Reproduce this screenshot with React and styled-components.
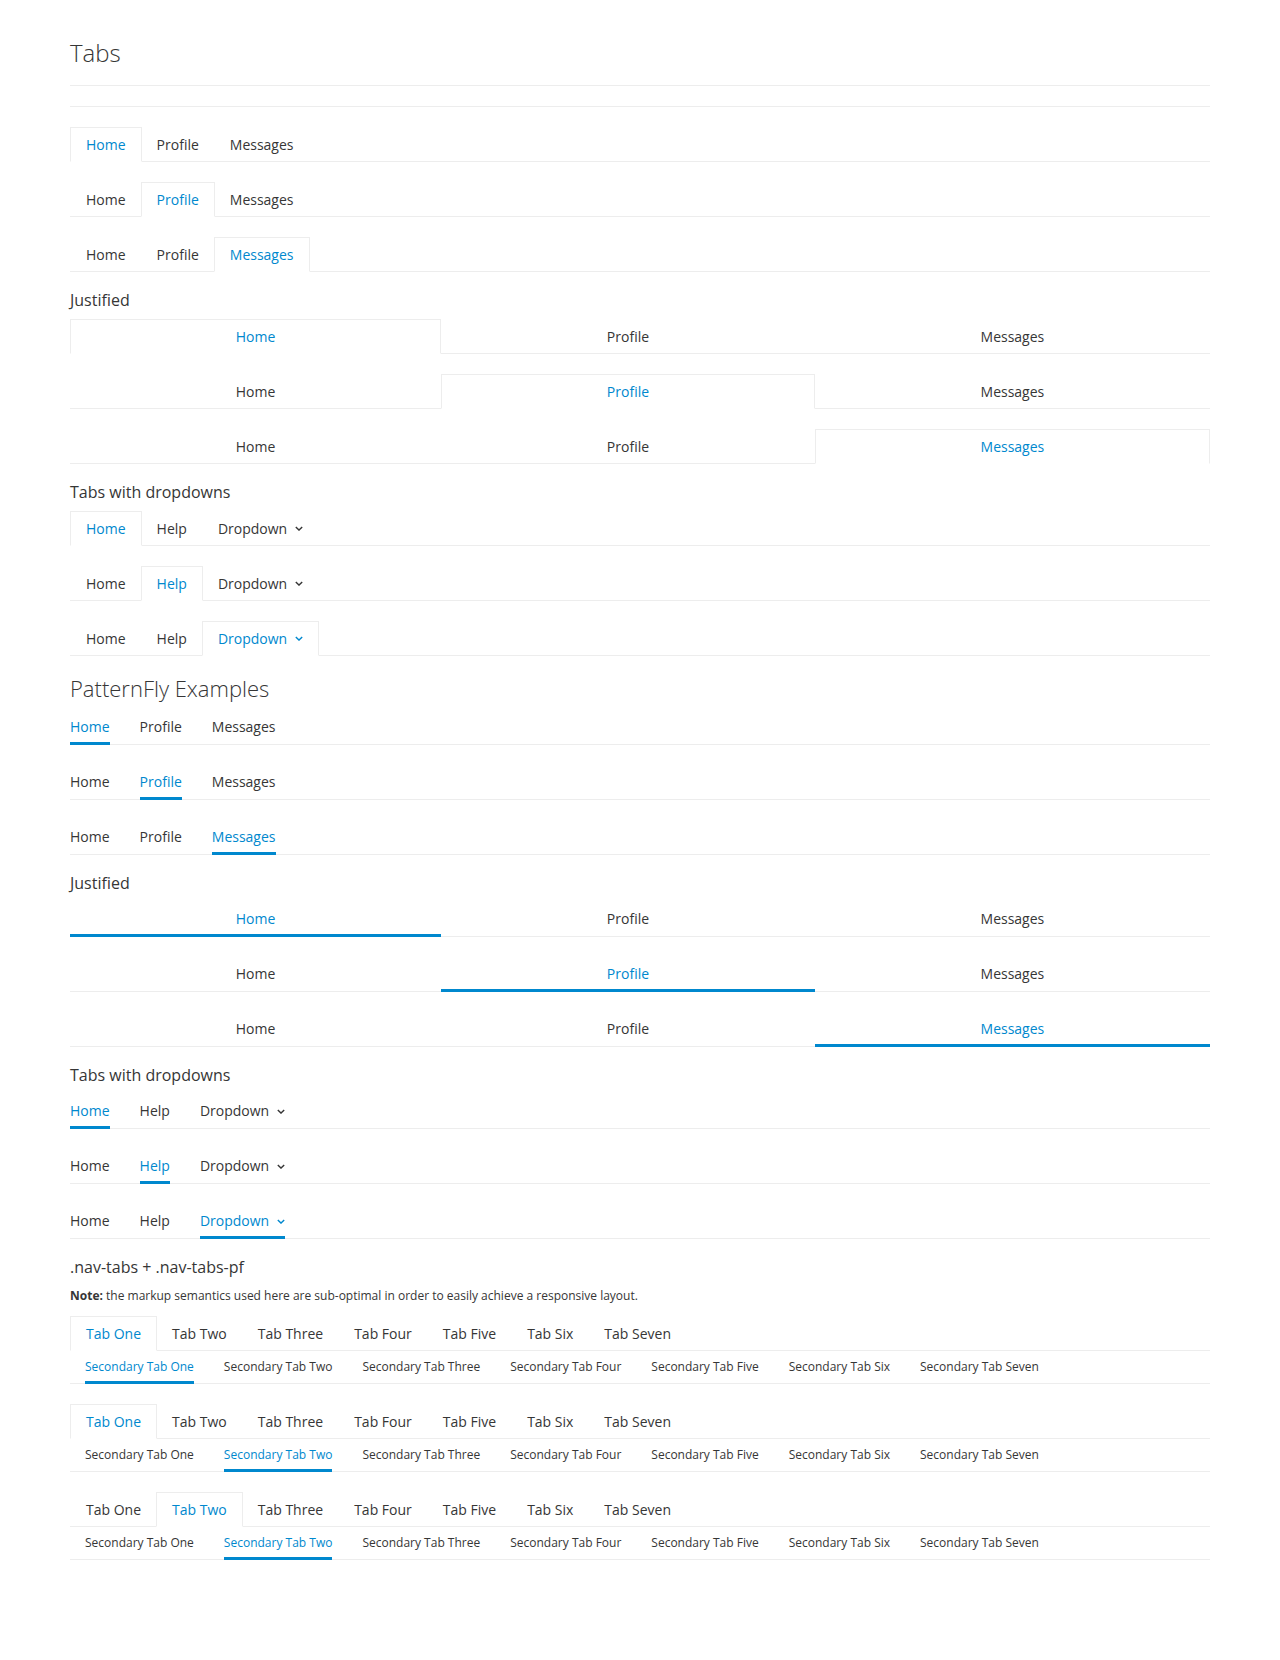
import React from "react";
import styled, { createGlobalStyle, css } from "styled-components";

const BLUE = "#0088ce";
const LINE = "#ededed";
const TEXT = "#363636";

const GlobalStyle = createGlobalStyle`
  body {
    margin: 0;
    background: #fff;
    color: ${TEXT};
    font-family: "Open Sans", "Liberation Sans", sans-serif;
    font-size: 14px;
  }
  * {
    box-sizing: border-box;
  }
`;

const Container = styled.div`
  width: 1140px;
  margin: 0 auto;
  padding: 40px 0 60px;
`;

const PageTitle = styled.h1`
  margin: 0 0 20px;
  padding-bottom: 19px;
  border-bottom: 1px solid ${LINE};
  font-size: 24px;
  font-weight: 300;
  line-height: 26px;
`;

const Rule = styled.hr`
  margin: 0 0 20px;
  height: 0;
  border: 0;
  border-top: 1px solid ${LINE};
`;

const SectionTitle = styled.h2`
  margin: 0 0 10px;
  font-size: 22px;
  font-weight: 300;
  line-height: 24px;
`;

const SubTitle = styled.h3`
  margin: 0 0 11px;
  font-size: 16px;
  font-weight: 400;
  line-height: 16px;
`;

const Note = styled.p`
  margin: 0 0 11px;
  padding-top: 1px;
  font-size: 12px;
  line-height: 18px;
  b {
    font-weight: 700;
  }
`;

/* classic bootstrap tabs */
const TabList = styled.ul`
  display: flex;
  list-style: none;
  margin: 0 0 ${(p) => (p.$flush ? "0" : "20px")};
  padding: 0;
  border-bottom: 1px solid ${LINE};
`;

const TabItem = styled.li`
  margin-bottom: -1px;
  ${(p) =>
    p.$justified &&
    css`
      flex: 1 1 auto;
    `}
`;

const TabLink = styled.a`
  display: flex;
  align-items: center;
  justify-content: ${(p) => (p.$justified ? "center" : "flex-start")};
  height: 35px;
  margin-right: ${(p) => (p.$justified ? "0" : "-1px")};
  padding: 0 15px;
  border: 1px solid transparent;
  color: ${TEXT};
  line-height: 20px;
  cursor: pointer;
  ${(p) =>
    p.$active &&
    css`
      color: ${BLUE};
      background: #fff;
      border-color: ${LINE};
      border-bottom-color: #fff;
    `}
`;

/* patternfly underline tabs */
const LineList = styled.ul`
  display: flex;
  gap: ${(p) => (p.$justified ? "0" : "30px")};
  list-style: none;
  margin: 0 0 20px;
  padding: 0;
  height: 35px;
  border-bottom: 1px solid ${LINE};
`;

const LineItem = styled.li`
  ${(p) =>
    p.$justified &&
    css`
      flex: 1 1 auto;
    `}
`;

const LineLink = styled.a`
  position: relative;
  display: flex;
  align-items: center;
  justify-content: center;
  height: 34px;
  color: ${(p) => (p.$active ? BLUE : TEXT)};
  line-height: 20px;
  cursor: pointer;
  ${(p) =>
    p.$active &&
    css`
      &::after {
        content: "";
        position: absolute;
        left: 0;
        right: 0;
        bottom: -1px;
        height: 3px;
        background: ${BLUE};
      }
    `}
`;

/* secondary row of nav-tabs-pf */
const SubList = styled.ul`
  display: flex;
  gap: 30px;
  list-style: none;
  margin: 0 0 20px;
  padding: 0 0 0 15px;
  height: 33px;
  border-bottom: 1px solid ${LINE};
  font-size: 12px;
`;

const SubLink = styled(LineLink)`
  height: 32px;
`;

const Caret = styled.svg`
  margin-left: 8px;
  width: 8px;
  height: 5px;
  flex: none;
`;

const Chevron = () => (
  <Caret viewBox="0 0 10 6">
    <path d="M1 1l4 4 4-4" fill="none" stroke="currentColor" strokeWidth="1.7" />
  </Caret>
);

const Label = ({ text }) => (
  <>
    {text}
    {text === "Dropdown" && <Chevron />}
  </>
);

const Tabs = ({ items, active, justified, flush }) => (
  <TabList $flush={flush}>
    {items.map((item, i) => (
      <TabItem key={item} $justified={justified}>
        <TabLink $active={i === active} $justified={justified}>
          <Label text={item} />
        </TabLink>
      </TabItem>
    ))}
  </TabList>
);

const LineTabs = ({ items, active, justified }) => (
  <LineList $justified={justified}>
    {items.map((item, i) => (
      <LineItem key={item} $justified={justified}>
        <LineLink $active={i === active}>
          <Label text={item} />
        </LineLink>
      </LineItem>
    ))}
  </LineList>
);

const SubTabs = ({ items, active }) => (
  <SubList>
    {items.map((item, i) => (
      <li key={item}>
        <SubLink $active={i === active}>{item}</SubLink>
      </li>
    ))}
  </SubList>
);

const basic = ["Home", "Profile", "Messages"];
const drop = ["Home", "Help", "Dropdown"];
const primary = ["One", "Two", "Three", "Four", "Five", "Six", "Seven"].map((n) => "Tab " + n);
const secondary = primary.map((t) => "Secondary " + t);
const pfRows = [
  [0, 0],
  [0, 1],
  [1, 1],
];

export default function App() {
  return (
    <>
      <GlobalStyle />
      <Container>
        <PageTitle>Tabs</PageTitle>
        <Rule />

        {[0, 1, 2].map((i) => (
          <Tabs key={i} items={basic} active={i} />
        ))}
        <SubTitle>Justified</SubTitle>
        {[0, 1, 2].map((i) => (
          <Tabs key={i} items={basic} active={i} justified />
        ))}
        <SubTitle>Tabs with dropdowns</SubTitle>
        {[0, 1, 2].map((i) => (
          <Tabs key={i} items={drop} active={i} />
        ))}

        <SectionTitle>PatternFly Examples</SectionTitle>
        {[0, 1, 2].map((i) => (
          <LineTabs key={i} items={basic} active={i} />
        ))}
        <SubTitle>Justified</SubTitle>
        {[0, 1, 2].map((i) => (
          <LineTabs key={i} items={basic} active={i} justified />
        ))}
        <SubTitle>Tabs with dropdowns</SubTitle>
        {[0, 1, 2].map((i) => (
          <LineTabs key={i} items={drop} active={i} />
        ))}

        <SubTitle>.nav-tabs + .nav-tabs-pf</SubTitle>
        <Note>
          <b>Note:</b> the markup semantics used here are sub-optimal in order to easily achieve a
          responsive layout.
        </Note>
        {pfRows.map(([p, s], i) => (
          <React.Fragment key={i}>
            <Tabs items={primary} active={p} flush />
            <SubTabs items={secondary} active={s} />
          </React.Fragment>
        ))}
      </Container>
    </>
  );
}
